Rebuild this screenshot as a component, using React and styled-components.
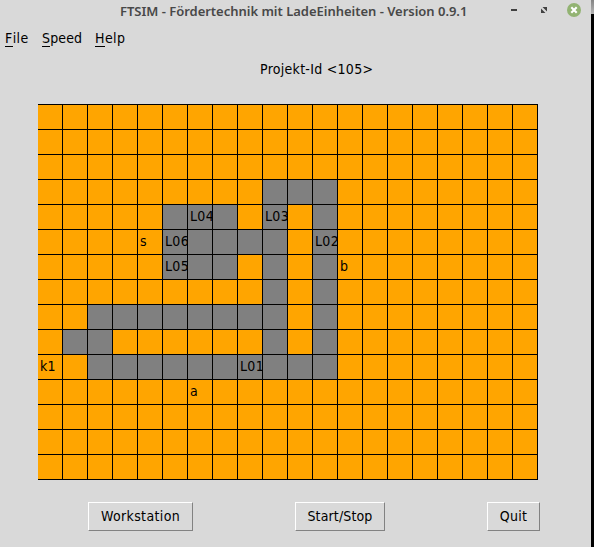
import React from "react";
import styled, { createGlobalStyle } from "styled-components";

const GlobalStyle = createGlobalStyle`
  * { box-sizing: border-box; }
  body { margin: 0; background: #000; overflow: hidden; }
`;

const Desktop = styled.div`
  width: 594px;
  height: 547px;
  background: linear-gradient(#858585, #b4b4b4) right top / 3px 14px no-repeat #000;
`;

const Window = styled.main`
  display: flex;
  flex-direction: column;
  width: 591px;
  height: 547px;
  background: #d9d9d9;
  color: #000;
  font-family: "DejaVu Sans Condensed", "DejaVu Sans", sans-serif;
  font-stretch: condensed;
  font-size: 14px;
`;

const TitleBar = styled.header`
  display: flex;
  height: 24px;
`;

const Title = styled.h1`
  width: 390px;
  margin: 0 0 0 120px;
  font: 600 13px/23px "Noto Sans", sans-serif;
  letter-spacing: ${(p) => p.$tracking}px;
  color: #484848;
  white-space: nowrap;
`;

const WindowControls = styled.svg`
  display: block;
  width: 81px;
  height: 24px;
`;

const MenuBar = styled.nav`
  display: flex;
  height: 29px;
  padding-left: 5px;
`;

const MenuItem = styled.span`
  width: ${(p) => p.$width}px;
  line-height: 29px;
  letter-spacing: ${(p) => p.$tracking || 0}px;
`;

const Mnemonic = styled.span`
  display: inline-block;
  height: 17px;
  line-height: 17px;
  border-bottom: 1px solid #000;
`;

const ProjectLabel = styled.div`
  height: 51px;
  padding-left: 260px;
  line-height: 32px;
  letter-spacing: ${(p) => p.$tracking}px;
`;

const Board = styled.section`
  display: grid;
  grid-template-columns: repeat(20, 25px);
  grid-auto-rows: 25px;
  width: 500px;
  margin-left: 38px;
  border-top: 1px solid #000;
`;

const Cell = styled.div`
  overflow: hidden;
  padding-left: 2px;
  background: ${(p) => (p.$track ? "#808080" : "#ffa500")};
  box-shadow: inset -1px -1px #000;
  line-height: 23px;
  letter-spacing: 0.3px;
  white-space: nowrap;
`;

const ButtonRow = styled.footer`
  display: flex;
  padding: 22px 0 0 88px;
`;

const Button = styled.button`
  width: ${(p) => p.$width}px;
  height: 29px;
  margin: 0 ${(p) => p.$gap || 0}px 0 0;
  padding: 0 0 1px;
  border: 1px solid;
  border-color: #fff #828282 #828282 #fff;
  border-radius: 0;
  background: #d9d9d9;
  color: #000;
  font: inherit;
  line-height: 26px;
  letter-spacing: ${(p) => p.$tracking || 0}px;
`;

const layout = [
  "....................",
  "....................",
  "....................",
  ".........###........",
  ".....###.#.#........",
  ".....#####.#........",
  ".....###.#.#........",
  ".........#.#........",
  "..########.#........",
  ".##......#.#........",
  "..##########........",
  "....................",
  "....................",
  "....................",
  "....................",
];

const labels = {
  "4,6": "L04", "4,9": "L03",
  "5,4": "s", "5,5": "L06", "5,11": "L02",
  "6,5": "L05", "6,12": "b",
  "10,0": "k1", "10,8": "L01",
  "11,6": "a",
};

export default function App() {
  return (
    <Desktop>
      <GlobalStyle />
      <Window>
        <TitleBar>
          <Title $tracking={-0.02}>FTSIM - Fördertechnik mit LadeEinheiten - Version 0.9.1</Title>
          <WindowControls viewBox="510 0 81 24">
            <path d="M511 9h6v2h-6z" fill="#414141" />
            <path d="M542.5 7h4.5v4.5zM541 8.5v4.5h4.5z" fill="#414141" />
            <circle cx="574" cy="10" r="7" fill="#92b372" />
            <path d="M571.3 7.3l5.4 5.4M576.7 7.3l-5.4 5.4" stroke="#fff" strokeWidth="2.1" />
          </WindowControls>
        </TitleBar>
        <MenuBar>
          <MenuItem $width={37} $tracking={0.4}><Mnemonic>F</Mnemonic>ile</MenuItem>
          <MenuItem $width={53} $tracking={0.15}><Mnemonic>S</Mnemonic>peed</MenuItem>
          <MenuItem $width={40} $tracking={0.4}><Mnemonic>H</Mnemonic>elp</MenuItem>
        </MenuBar>
        <ProjectLabel $tracking={0.28}>Projekt-Id &lt;105&gt;</ProjectLabel>
        <Board>
          {layout.flatMap((row, r) =>
            [...row].map((tile, c) => (
              <Cell key={`${r},${c}`} $track={tile === "#"}>{labels[`${r},${c}`]}</Cell>
            ))
          )}
        </Board>
        <ButtonRow>
          <Button $width={105} $gap={102} $tracking={0.36}>Workstation</Button>
          <Button $width={90} $gap={102} $tracking={0.14}>Start/Stop</Button>
          <Button $width={53} $tracking={0.3}>Quit</Button>
        </ButtonRow>
      </Window>
    </Desktop>
  );
}
